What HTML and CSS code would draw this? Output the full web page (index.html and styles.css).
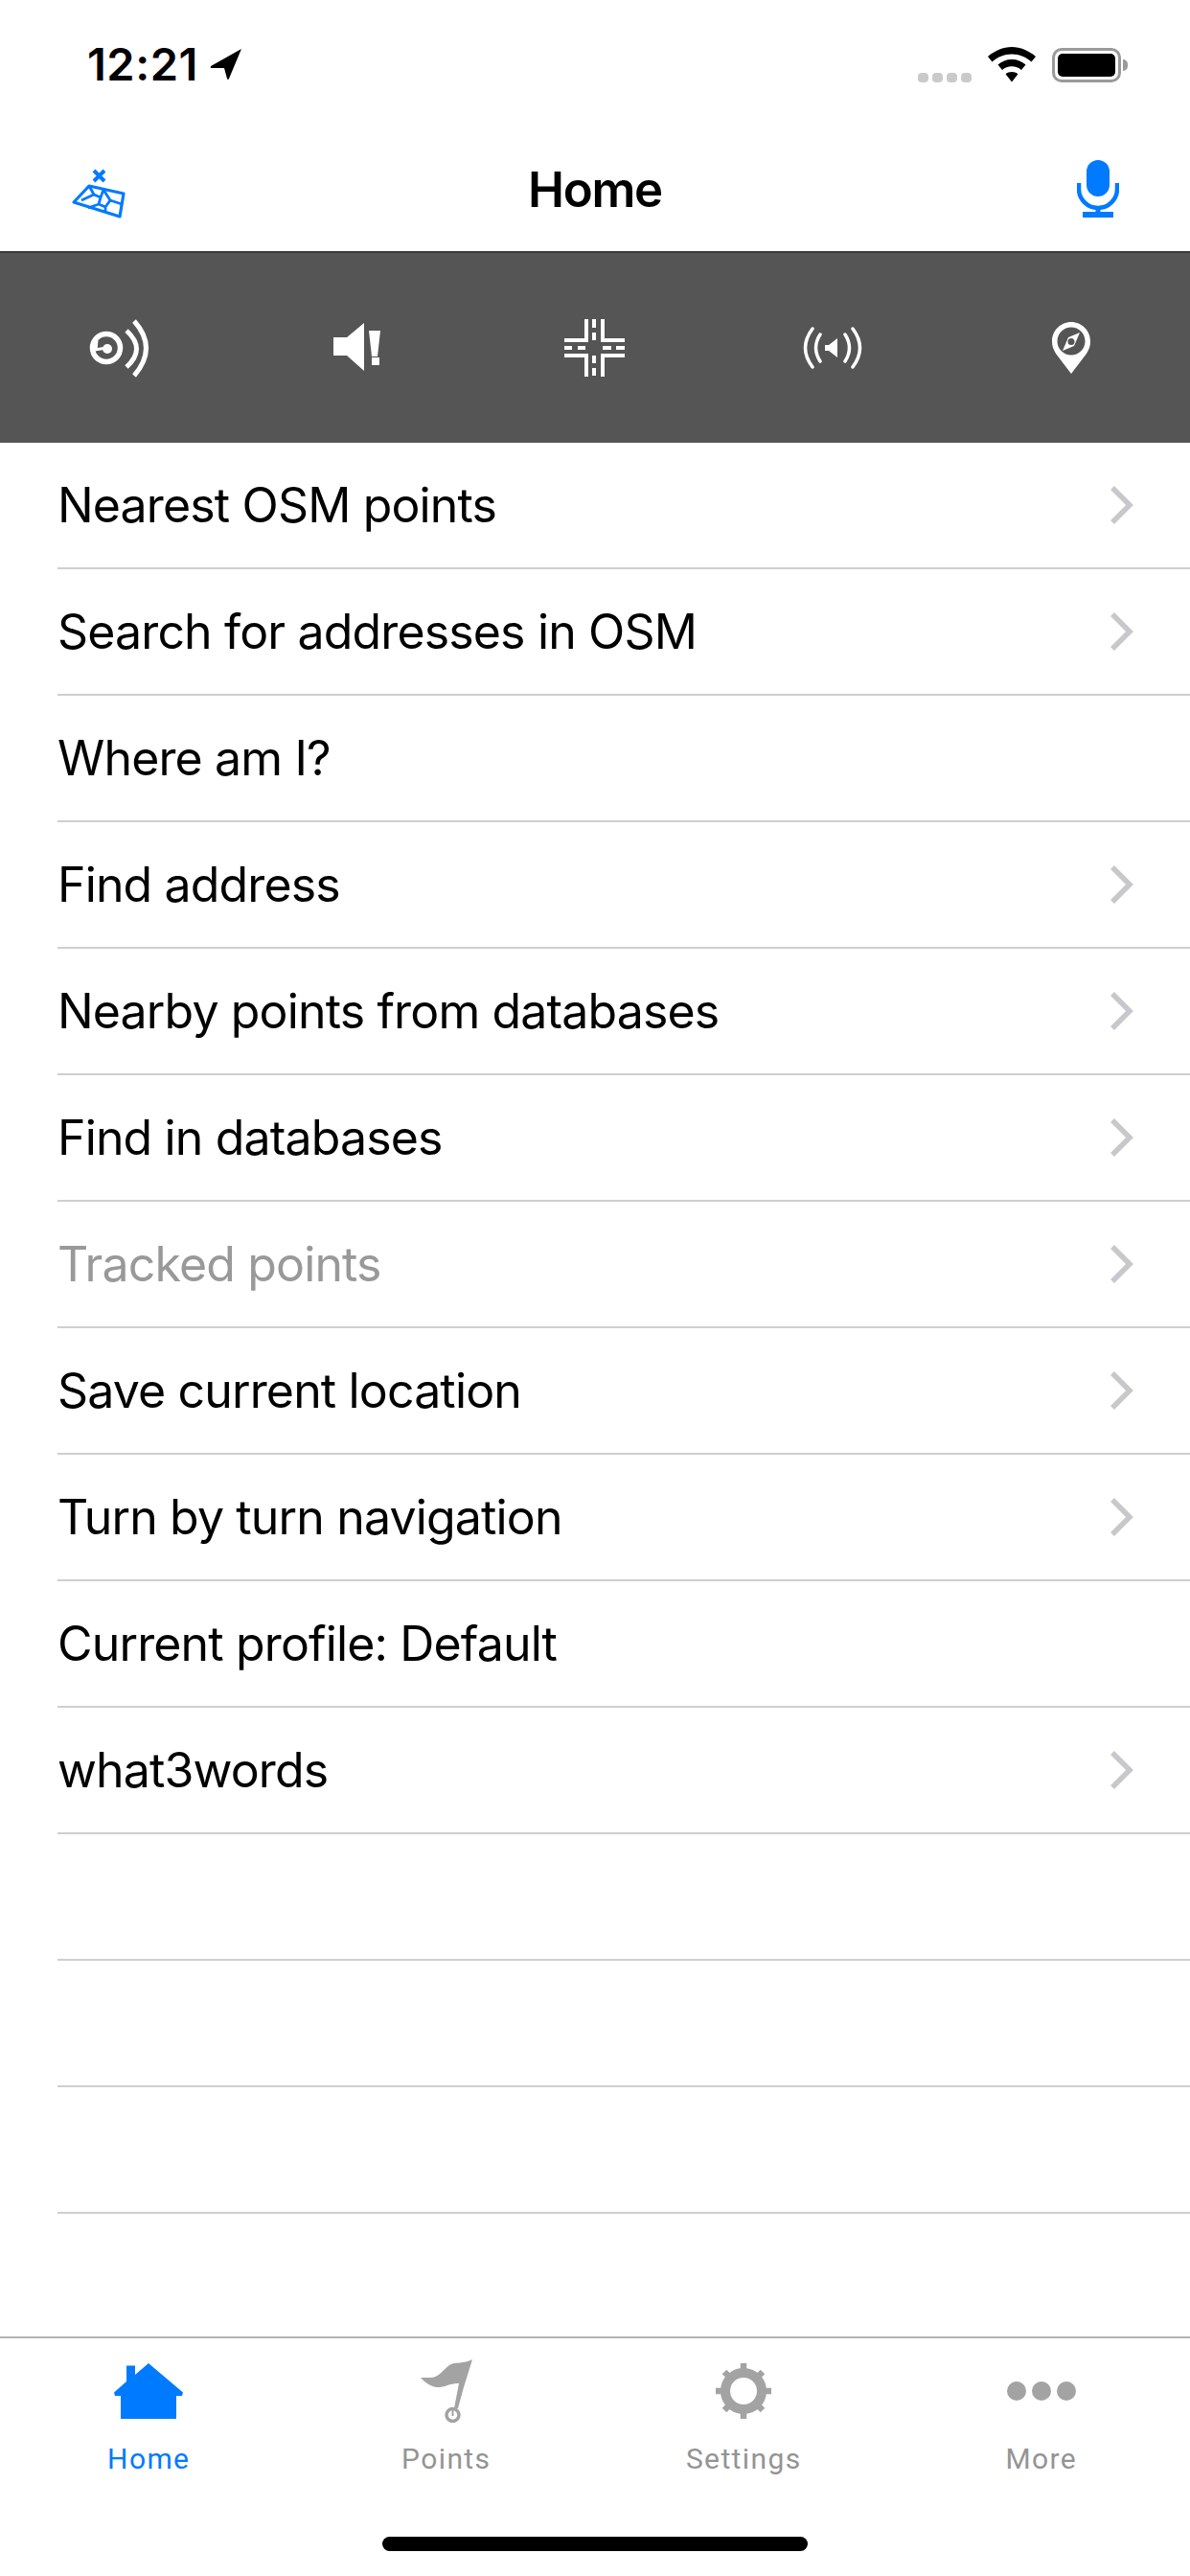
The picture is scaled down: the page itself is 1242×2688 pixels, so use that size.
FILE: index.html
```html
<!DOCTYPE html>
<html lang="en">
<head>
<meta charset="utf-8">
<title>Home</title>
<link rel="stylesheet" href="styles.css">
</head>
<body>
<div class="screen">
  <header class="status">
    <div class="status-left">
      <span class="time">12:21</span>
      <svg class="loc" viewBox="0 0 34 34"><path d="M33 1 L1 19 Q0 21 2 21 L15 21 L18 32 Q19 34 20 32 Z"/></svg>
    </div>
    <div class="status-right">
      <div class="signal"><i></i><i></i><i></i><i></i></div>
      <svg class="wifi" viewBox="0 0 50 37"><path d="M25 0 C34 0 43 4 50 10 L45.500 15.500 C40 10.500 33 7.500 25 7.500 C17 7.500 10 10.500 4.500 15.500 L0 10 C7 4 16 0 25 0 Z M25 13 C30.500 13 35.500 15 39.500 18.500 L35 24 C32 21.500 29 20.300 25 20.300 C21 20.300 18 21.500 15 24 L10.500 18.500 C14.500 15 19.500 13 25 13 Z M25 26 C27.500 26 29.700 26.800 31.500 28.300 L25 36.500 L18.500 28.300 C20.300 26.800 22.500 26 25 26 Z"/></svg>
      <div class="battery"><div class="battery-fill"></div></div>
      <div class="battery-cap"></div>
    </div>
  </header>

  <nav class="navbar">
    <div class="nav-left">
      <svg class="map-icon" viewBox="0 0 60 60" fill="none" stroke="#007aff">
        <path stroke-width="4" d="M24 10 L35 21 M35 10 L24 21"/>
        <path stroke-width="3.200" stroke-linejoin="round" d="M19 26 L55 34 L51 58 L3 43 Z"/>
        <path stroke-width="2.800" stroke-linejoin="round" d="M19 26 L24 35 L11 41 M24 35 L31 38 L34 30 M31 38 L29 45 L18 49 M29 45 L36 48 L41 41 L34 30 M41 41 L53 45 M36 48 L36 52"/>
      </svg>
    </div>
    <h1 class="title">Home</h1>
    <div class="nav-right">
      <svg class="mic-icon" viewBox="0 0 44 62" fill="#007aff">
        <rect x="10" y="0" width="24" height="38" rx="12"/>
        <path d="M2 24 V30 A20 20 0 0 0 42 30 V24" fill="none" stroke="#007aff" stroke-width="4.500"/>
        <rect x="19.500" y="48" width="5" height="9"/>
        <rect x="6" y="54" width="32" height="6"/>
      </svg>
    </div>
  </nav>

  <section class="toolbar">
    <div class="tool">
      <svg viewBox="-36 -36 72 72" fill="none" stroke="#fff">
        <circle cx="-13" cy="0" r="14.500" stroke-width="5.500"/>
        <circle cx="-12" cy="1" r="5" fill="#fff" stroke="none"/>
        <path stroke-width="3" d="M-25 2 L-13 0 M-23 -8 L-24 2"/>
        <path stroke-width="5" d="M8 -18 Q29 1 8 20"/>
        <path stroke-width="5" d="M16 -28 Q41 0 16 29"/>
      </svg>
    </div>
    <div class="tool">
      <svg viewBox="-36 -36 72 72" fill="#fff">
        <path d="M-25 -11 H-11 L7 -26 V24 L-11 8 H-25 Z"/>
        <path d="M12 -18 H24 L21 9 H15 Z"/>
        <rect x="15" y="10" width="8" height="8"/>
      </svg>
    </div>
    <div class="tool">
      <svg viewBox="-36 -36 72 72" fill="none" stroke="#fff" stroke-width="4">
        <path d="M-32 -8 H-9 V-30 M31 -8 H8 V-30 M-32 8 H-9 V30 M31 8 H8 V30"/>
        <path d="M-32 0 H-24 M-18 0 H-10 M8 0 H17 M22 0 H31 M-1 -30 V-21 M-1 -16 V-8 M-1 8 V16 M-1 21 V29"/>
      </svg>
    </div>
    <div class="tool">
      <svg viewBox="-36 -36 72 72" fill="none" stroke="#fff" stroke-width="3.500" stroke-linecap="round">
        <path d="M-21 -20 Q-36 0 -21 20 M-13 -14 Q-22 0 -13 14 M21 -20 Q36 0 21 20 M13 -14 Q22 0 13 14"/>
        <path fill="#fff" stroke="none" d="M-8 -3 H-4 L5 -10 V10 L-4 3 H-8 Z"/>
      </svg>
    </div>
    <div class="tool">
      <svg viewBox="-36 -36 72 72" fill="#fff">
        <path fill-rule="evenodd" d="M0 -27 C11 -27 20 -18 20 -7 C20 -2 19 1 16 6 L0 27 L-16 6 C-19 1 -20 -2 -20 -7 C-20 -18 -11 -27 0 -27 Z M0 -21.500 A14.500 14.500 0 1 0 0 7.500 A14.500 14.500 0 1 0 0 -21.500 Z"/>
        <path fill-rule="evenodd" d="M9 -16 L3 -2 L-9 3 L-3 -11 Z M0 -10 A3.500 3.500 0 1 0 0 -3 A3.500 3.500 0 1 0 0 -10 Z"/>
      </svg>
    </div>
  </section>

  <ul class="list">
    <li class="row"><span>Nearest OSM points</span><svg class="chevron" viewBox="0 0 26 42"><path d="M3 3 L21 21 L3 39"/></svg></li>
    <li class="row"><span>Search for addresses in OSM</span><svg class="chevron" viewBox="0 0 26 42"><path d="M3 3 L21 21 L3 39"/></svg></li>
    <li class="row"><span>Where am I?</span></li>
    <li class="row"><span>Find address</span><svg class="chevron" viewBox="0 0 26 42"><path d="M3 3 L21 21 L3 39"/></svg></li>
    <li class="row"><span>Nearby points from databases</span><svg class="chevron" viewBox="0 0 26 42"><path d="M3 3 L21 21 L3 39"/></svg></li>
    <li class="row"><span>Find in databases</span><svg class="chevron" viewBox="0 0 26 42"><path d="M3 3 L21 21 L3 39"/></svg></li>
    <li class="row row-disabled"><span>Tracked points</span><svg class="chevron" viewBox="0 0 26 42"><path d="M3 3 L21 21 L3 39"/></svg></li>
    <li class="row"><span>Save current location</span><svg class="chevron" viewBox="0 0 26 42"><path d="M3 3 L21 21 L3 39"/></svg></li>
    <li class="row"><span>Turn by turn navigation</span><svg class="chevron" viewBox="0 0 26 42"><path d="M3 3 L21 21 L3 39"/></svg></li>
    <li class="row"><span>Current profile: Default</span></li>
    <li class="row"><span>what3words</span><svg class="chevron" viewBox="0 0 26 42"><path d="M3 3 L21 21 L3 39"/></svg></li>
    <li class="row"></li>
    <li class="row"></li>
    <li class="row"></li>
  </ul>

  <footer class="tabbar">
    <div class="tabs">
      <div class="tab tab-active">
        <svg class="tab-icon" viewBox="-36 -33 72 66" fill="#007aff"><path d="M0 -29 L-14 -17 V-26.500 H-23 V-10 L-36 1.500 L-35 5 H-29 V29 H29 V5 H35 L36 1.500 Z"/></svg>
        <span>Home</span>
      </div>
      <div class="tab">
        <svg class="tab-icon" viewBox="-36 -33 72 66" fill="#a3a3a3"><path d="M27 -33 C18 -28 9 -31 3 -27 C-4 -22 -8 -14 -17 -14 Q-23 -14 -27 -14 Q-20 -6 -11 -4 C-3 -3 5 -9 13 -8 L8 18 L12 18 L18 -4 Z"/><circle cx="6.500" cy="25" r="6.500" fill="none" stroke="#a3a3a3" stroke-width="3.500"/><path d="M5.500 19 H7.500 V26 H5.500 Z"/></svg>
        <span>Points</span>
      </div>
      <div class="tab">
        <svg class="tab-icon" viewBox="-36 -33 72 66" fill="none" stroke="#a3a3a3"><circle r="19" stroke-width="10"/><path stroke-width="6.500" d="M0 -29 V-20 M0 29 V20 M-29 0 H-20 M29 0 H20 M-20 -20 L-14 -14 M20 20 L14 14 M20 -20 L14 -14 M-20 20 L-14 14"/></svg>
        <span>Settings</span>
      </div>
      <div class="tab">
        <svg class="tab-icon" viewBox="-36 -33 72 66" fill="#a3a3a3"><circle cx="-26" r="10"/><circle r="10"/><circle cx="26" r="10"/></svg>
        <span>More</span>
      </div>
    </div>
    <div class="home-indicator"></div>
  </footer>
</div>
</body>
</html>
```

FILE: styles.css
```css
* {
  box-sizing: border-box;
}

html,
body {
  margin: 0;
  padding: 0;
  background: #fff;
}

.screen {
  width: 1242px;
  height: 2688px;
  display: flex;
  flex-direction: column;
  font-family: Inter, "Liberation Sans", sans-serif;
  color: #000;
  overflow: hidden;
}

.status {
  height: 132px;
  flex: none;
  display: flex;
  justify-content: space-between;
  align-items: flex-start;
  padding: 49px 65px 0 91px;
}

.status-left {
  display: flex;
  align-items: center;
  gap: 12px;
}

.time {
  font-size: 47px;
  font-weight: 600;
  line-height: 36px;
  letter-spacing: 0.5px;
}

.loc {
  width: 34px;
  height: 34px;
  fill: #000;
}

.status-right {
  display: flex;
  align-items: center;
}

.signal {
  display: flex;
  gap: 4px;
  align-self: flex-end;
  margin-right: 17px;
}

.signal i {
  width: 11px;
  height: 10px;
  border-radius: 4px;
  background: #cacaca;
}

.wifi {
  width: 50px;
  height: 37px;
  fill: #000;
  margin-right: 17px;
}

.battery {
  width: 72px;
  height: 36px;
  border: 3px solid #9a9a9a;
  border-radius: 10px;
  padding: 3px;
}

.battery-fill {
  height: 100%;
  background: #000;
  border-radius: 5px;
}

.battery-cap {
  width: 5px;
  height: 12px;
  margin-left: 2px;
  background: #9a9a9a;
  border-radius: 0 6px 6px 0;
}

.navbar {
  height: 132px;
  flex: none;
  display: grid;
  grid-template-columns: 1fr auto 1fr;
  align-items: center;
  padding: 2px 74px 0;
  border-bottom: 2px solid #3c3c3c;
}

.nav-left,
.nav-right {
  display: flex;
}

.nav-right {
  justify-content: flex-end;
}

.map-icon {
  width: 60px;
  height: 60px;
}

.mic-icon {
  width: 44px;
  height: 62px;
}

.title {
  margin: 0;
  font-size: 51px;
  font-weight: 600;
  line-height: 60px;
  letter-spacing: -1.35px;
}

.toolbar {
  height: 198px;
  flex: none;
  display: grid;
  grid-template-columns: repeat(5, 1fr);
  align-items: center;
  background: #555;
}

.tool {
  display: flex;
  justify-content: center;
}

.tool svg {
  width: 72px;
  height: 72px;
}

.list {
  flex: 1;
  margin: 0;
  padding: 0;
  list-style: none;
}

.row {
  height: 132px;
  margin-left: 60px;
  padding-right: 58px;
  display: flex;
  justify-content: space-between;
  align-items: center;
  font-size: 50px;
  letter-spacing: -0.85px;
  border-bottom: 2px solid #cfcfd1;
}

.row-disabled {
  color: #999;
}

.chevron {
  width: 26px;
  height: 42px;
  fill: none;
  stroke: #c7c7cc;
  stroke-width: 5.5px;
}

.tabbar {
  height: 250px;
  flex: none;
  border-top: 2px solid #b2b2b2;
  display: flex;
  flex-direction: column;
  align-items: center;
}

.tabs {
  width: 100%;
  display: grid;
  grid-template-columns: repeat(4, 1fr);
  padding-top: 22px;
}

.tab {
  display: flex;
  flex-direction: column;
  align-items: center;
  font-size: 30px;
  line-height: 36px;
  color: #949494;
  letter-spacing: 1.4px;
  font-family: Roboto, Inter, sans-serif;
}

.tab-active {
  color: #007aff;
}

.tab-icon {
  width: 72px;
  height: 66px;
  margin-bottom: 20px;
}

.home-indicator {
  width: 444px;
  height: 15px;
  margin-top: 63px;
  border-radius: 8px;
  background: #000;
}
```
